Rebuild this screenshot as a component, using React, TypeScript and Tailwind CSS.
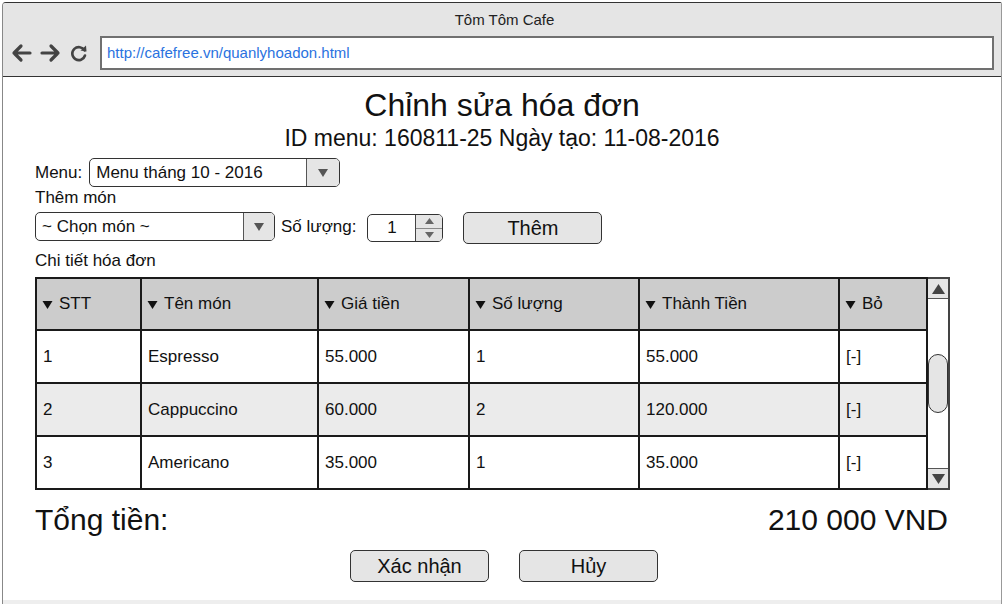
import React from "react";

const Tri = ({ className = "" }: { className?: string }) => (
  <svg width="12" height="10" viewBox="0 0 12 10" className={className}>
    <path d="M1 1 L11 1 L6 9 Z" fill="#555" />
  </svg>
);

const HeadTri = () => (
  <svg width="11" height="9" viewBox="0 0 11 9" className="inline-block mr-[6px] mb-[1px]">
    <path d="M0.5 1 L10.5 1 L5.5 9 Z" fill="#111" />
  </svg>
);

const Select = ({ text, width, btnW }: { text: string; width: number; btnW: number }) => (
  <div
    className="flex h-[29px] border border-[#333] rounded-[5px] bg-white overflow-hidden"
    style={{ width }}
  >
    <div className="flex-1 pl-[6px] flex items-center text-[17px] text-[#111]">{text}</div>
    <div className="flex items-center justify-center bg-[#e5e5e5] border-l border-[#555]" style={{ width: btnW }}>
      <Tri />
    </div>
  </div>
);

const rows = [
  ["1", "Espresso", "55.000", "1", "55.000", "[-]"],
  ["2", "Cappuccino", "60.000", "2", "120.000", "[-]"],
  ["3", "Americano", "35.000", "1", "35.000", "[-]"],
];
const heads = ["STT", "Tên món", "Giá tiền", "Số lượng", "Thành Tiền", "Bỏ"];
const widths = [105, 177, 151, 170, 200, 88];

export default function App() {
  return (
    <div
      className="w-[1004px] h-[604px] bg-white overflow-hidden"
      style={{ fontFamily: '"Liberation Sans", Arial, sans-serif' }}
    >
      <div className="ml-[2px] mt-[2px] w-[1000px] h-[602px] flex flex-col border-t border-l border-r border-t-[#333] border-l-[#888] border-r-[#999] rounded-tl-[4px] rounded-tr-[2px] overflow-hidden">
        {/* browser bar */}
        <div className="h-[74px] bg-[#e5e5e5] border-b border-[#333] flex flex-col">
          <div className="h-[33px] flex items-center justify-center text-[15px] text-[#222] pt-[1px] pl-[5px]">Tôm Tôm Cafe</div>
          <div className="flex items-center h-[34px]">
            <svg width="22" height="20" viewBox="0 0 22 20" className="ml-[7px]">
              <path d="M20 10 H4 M11 3 L4 10 L11 17" stroke="#444" strokeWidth="3.2" fill="none" strokeLinecap="round" strokeLinejoin="round" />
            </svg>
            <svg width="22" height="20" viewBox="0 0 22 20" className="ml-[8px]">
              <path d="M2 10 H18 M11 3 L18 10 L11 17" stroke="#444" strokeWidth="3.2" fill="none" strokeLinecap="round" strokeLinejoin="round" />
            </svg>
            <svg width="20" height="20" viewBox="0 0 20 20" className="ml-[7px]">
              <path d="M15.5 7.5 A6.5 6.5 0 1 0 16 12.5" stroke="#444" strokeWidth="2.6" fill="none" strokeLinecap="round" />
              <path d="M11.5 7.5 L17.5 8.5 L17 2.5 Z" fill="#444" />
            </svg>
            <div className="ml-[11px] w-[894px] h-[34px] bg-white border-2 border-[#707070] flex items-center pl-[5px] text-[15px] text-[#2a72e0]">
              http://cafefree.vn/quanlyhoadon.html
            </div>
          </div>
        </div>

        {/* content */}
        <div className="flex-1 flex flex-col text-[#111]">
          <div className="text-center text-[32px] leading-[36px] mt-[10px]">Chỉnh sửa hóa đơn</div>
          <div className="text-center text-[23px] leading-[27px] mt-[2px]">ID menu: 160811-25 Ngày tạo: 11-08-2016</div>

          <div className="pl-[32px] flex flex-col">
            <div className="flex items-center mt-[6px] h-[29px]">
              <span className="text-[17px] mr-[7px]">Menu:</span>
              <Select text="Menu tháng 10 - 2016" width={251} btnW={33} />
            </div>
            <div className="text-[17px] leading-[20px] mt-[1px]">Thêm món</div>
            <div className="flex items-start mt-[4px] h-[32px]">
              <Select text="~ Chọn món ~" width={240} btnW={31} />
              <span className="text-[17px] leading-[29px] ml-[6px]">Số lượng:</span>
              <div className="ml-[11px] mt-[2px] w-[76px] h-[28px] border border-[#333] rounded-[5px] flex overflow-hidden bg-white">
                <div className="w-[47px] flex items-center justify-center text-[17px]">1</div>
                <div className="flex-1 flex flex-col border-l border-[#444]">
                  <div className="flex-1 bg-[#e5e5e5] flex items-center justify-center border-b border-[#888]">
                    <svg width="9" height="6" viewBox="0 0 9 6"><path d="M0 6 L9 6 L4.5 0 Z" fill="#666" /></svg>
                  </div>
                  <div className="flex-1 bg-[#e5e5e5] flex items-center justify-center">
                    <svg width="9" height="6" viewBox="0 0 9 6"><path d="M0 0 L9 0 L4.5 6 Z" fill="#666" /></svg>
                  </div>
                </div>
              </div>
              <button className="ml-[20px] w-[139px] h-[32px] bg-[#e5e5e5] border border-[#333] rounded-[5px] text-[20px] text-[#111] flex items-center justify-center">
                Thêm
              </button>
            </div>
            <div className="text-[17px] leading-[20px] mt-[7px]">Chi tiết hóa đơn</div>

            <div className="flex mt-[6px]">
              <table className="table-fixed border-collapse w-[891px] border-2 border-[#1a1a1a]">
                <colgroup>
                  {widths.map((w, i) => (
                    <col key={i} style={{ width: w }} />
                  ))}
                </colgroup>
                <thead>
                  <tr className="h-[52px] bg-[#cccccc]">
                    {heads.map((h) => (
                      <th key={h} className="border-2 border-[#1a1a1a] text-left font-normal text-[17px] pl-[5px]">
                        <HeadTri />
                        {h}
                      </th>
                    ))}
                  </tr>
                </thead>
                <tbody>
                  {rows.map((r, i) => (
                    <tr key={i} className={`h-[52px] ${i === 1 ? "bg-[#ebebeb]" : "bg-white"}`}>
                      {r.map((c, j) => (
                        <td key={j} className="border-2 border-[#1a1a1a] text-[17px] pl-[6px]">
                          {c}
                        </td>
                      ))}
                    </tr>
                  ))}
                </tbody>
              </table>
              <div className="w-[22px] h-[213px] border-2 border-[#444] border-l-0 bg-white flex flex-col justify-between relative">
                <div className="h-[20px] bg-[#e5e5e5] border-b border-[#555] flex items-center justify-center">
                  <svg width="13" height="10" viewBox="0 0 13 10"><path d="M0 10 L13 10 L6.5 0 Z" fill="#444" /></svg>
                </div>
                <div className="absolute left-0 top-[75px] w-[20px] h-[59px] bg-[#e5e5e5] border border-[#333] rounded-[11px]" />
                <div className="h-[20px] bg-[#e5e5e5] border-t border-[#555] flex items-center justify-center">
                  <svg width="13" height="10" viewBox="0 0 13 10"><path d="M0 0 L13 0 L6.5 10 Z" fill="#444" /></svg>
                </div>
              </div>
            </div>

            <div className="w-[913px] flex justify-between items-center mt-[13px] text-[30px] leading-[34px]">
              <span>Tổng tiền:</span>
              <span>210 000 VND</span>
            </div>
          </div>

          <div className="flex justify-center gap-[30px] mt-[13px] pl-[4px]">
            <button className="w-[139px] h-[32px] bg-[#e5e5e5] border border-[#333] rounded-[5px] text-[20px] text-[#111] flex items-center justify-center">
              Xác nhận
            </button>
            <button className="w-[139px] h-[32px] bg-[#e5e5e5] border border-[#333] rounded-[5px] text-[20px] text-[#111] flex items-center justify-center">
              Hủy
            </button>
          </div>
          <div className="flex-1" />
          <div className="h-[4px] bg-[#eeeeee]" />
        </div>
      </div>
    </div>
  );
}
